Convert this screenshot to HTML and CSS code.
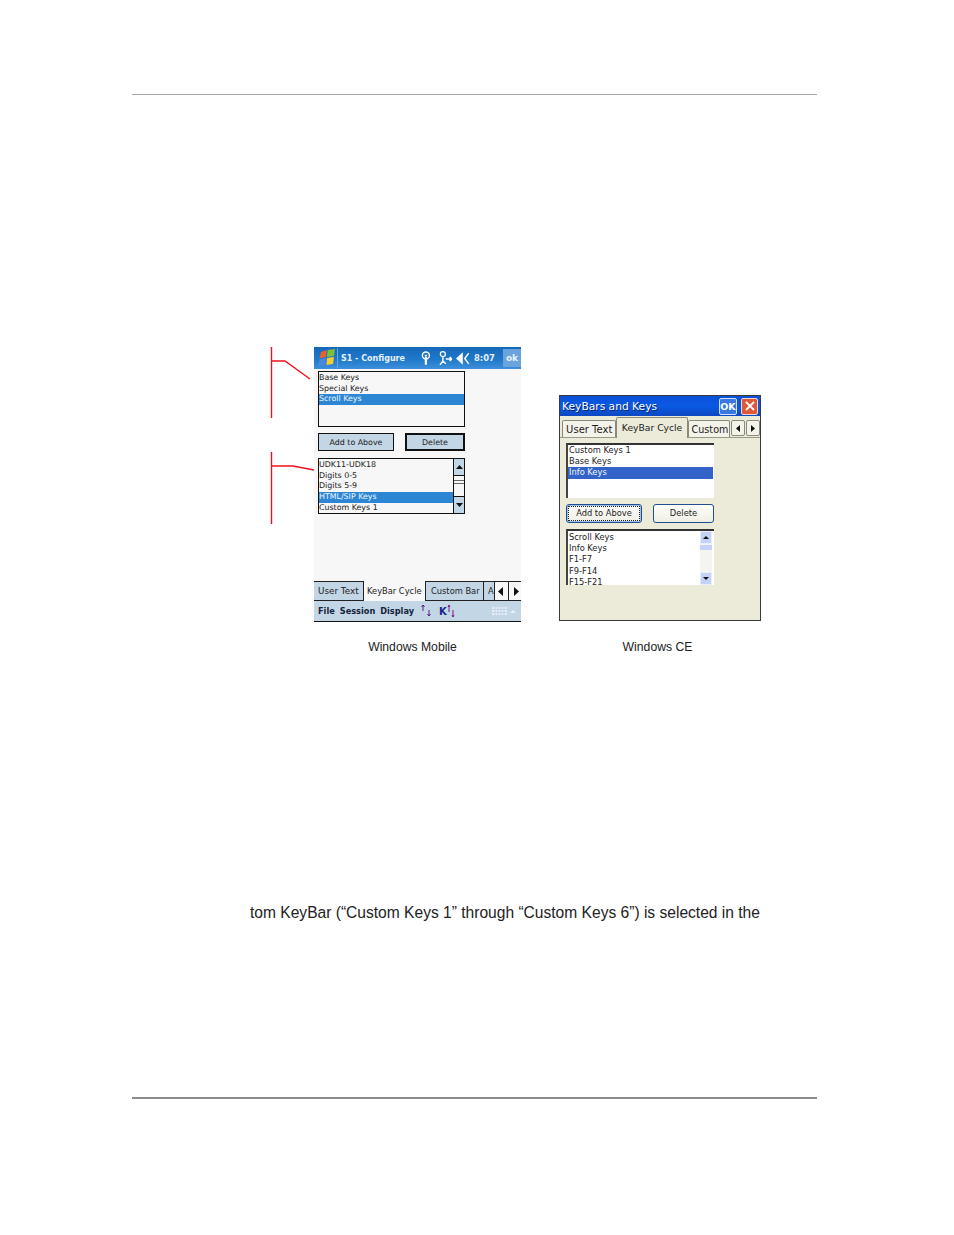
FILE: index.html
```html
<!DOCTYPE html>
<html lang="en">
<head>
<meta charset="utf-8">
<title>KeyBar Cycle configuration</title>
<link rel="stylesheet" href="styles.css">
</head>
<body>
<main class="page">
  <hr class="rule top-rule">
  <section class="figure">
    <svg class="callouts" width="60" height="190" viewBox="0 0 60 190">
      <path d="M11.5 0V71M11 14H25L50 32M11.5 105V177M11 119H33L54 123" fill="none" stroke="#f0101c" stroke-width="1.4"/>
    </svg>
    <div class="col col-wm">
      <div class="wm">
        <header class="wm-title">
          <svg class="flag" width="18" height="18" viewBox="0 0 18 18">
            <path d="M3 3 8.500 1 8 8 1.500 9.500Z" fill="#e8602a"/><path d="M9.500 1 17 0 16 7 9 8Z" fill="#7cc03c"/>
            <path d="M1.500 10.500 8 9 7.500 16 0 17.500Z" fill="#4a88e0"/><path d="M9 9 16 8 15 15 8.500 16Z" fill="#f6cc30"/>
          </svg>
          <span class="wm-sep"></span>
          <span class="wm-name">S1 - Configure</span>
          <svg class="wm-ant" width="10" height="14" viewBox="0 0 10 14"><circle cx="5" cy="4.500" r="3.600" fill="none" stroke="#fff" stroke-width="1.400"/><circle cx="5" cy="4.500" r="1.200" fill="#fff"/><path d="M5 6V14" stroke="#fff" stroke-width="2.200"/></svg>
          <svg class="wm-sync" width="15" height="14" viewBox="0 0 15 14"><circle cx="5" cy="3" r="2.600" fill="none" stroke="#fff" stroke-width="1.300"/><path d="M5 6V10L2 14M5 10 8 13M8 8H14M12 6 14 8 12 10" fill="none" stroke="#fff" stroke-width="1.500"/></svg>
          <svg class="wm-vol" width="14" height="13" viewBox="0 0 14 13"><path d="M0 6.500 7 0V13Z" fill="#fff"/><path d="M13 1 9 6.500 13 12" fill="none" stroke="#fff" stroke-width="1.500"/></svg>
          <span class="wm-time">8:07</span>
          <span class="wm-ok">ok</span>
        </header>
        <div class="wm-body">
          <ul class="wm-list wm-list-a">
            <li>Base Keys</li>
            <li>Special Keys</li>
            <li class="sel">Scroll Keys</li>
          </ul>
          <div class="wm-btns">
            <button class="wm-btn wm-add">Add to Above</button>
            <button class="wm-btn wm-del">Delete</button>
          </div>
          <div class="wm-list-b">
            <ul class="wm-list-b-items">
              <li>UDK11-UDK18</li>
              <li>Digits 0-5</li>
              <li>Digits 5-9</li>
              <li class="sel">HTML/SIP Keys</li>
              <li>Custom Keys 1</li>
            </ul>
            <div class="wm-scroll">
              <span class="wm-sb-btn"><svg width="7" height="4" viewBox="0 0 7 4"><path d="M3.500 0 7 4H0Z"/></svg></span>
              <span class="wm-sb-track"><span class="wm-sb-thumb"></span></span>
              <span class="wm-sb-btn"><svg width="7" height="4" viewBox="0 0 7 4"><path d="M3.500 4 7 0H0Z"/></svg></span>
            </div>
          </div>
        </div>
        <nav class="wm-tabs">
          <span class="wm-tab wm-tab-1">User Text</span>
          <span class="wm-tab wm-tab-on">KeyBar Cycle</span>
          <span class="wm-tab wm-tab-3">Custom Bar</span>
          <span class="wm-tab wm-tab-4">A</span>
          <span class="wm-arrows">
            <svg width="5" height="9" viewBox="0 0 5 9"><path d="M5 0V9L0 4.500Z"/></svg>
            <i></i>
            <svg width="5" height="9" viewBox="0 0 5 9"><path d="M0 0V9L5 4.500Z"/></svg>
          </span>
        </nav>
        <footer class="wm-menu">
          <b>File</b><b>Session</b><b>Display</b>
          <svg class="wm-ud" width="12" height="12" viewBox="0 0 12 12"><path d="M3 0V6M1.500 2 3 0 4.500 2" fill="none" stroke="#5a1f8a"/><path d="M9 5V11M7.500 9 9 11 10.500 9" fill="none" stroke="#5a1f8a"/></svg>
          <span class="wm-k">K</span>
          <svg class="wm-ud2" width="8" height="13" viewBox="0 0 8 13"><path d="M2 0V7M1 2 2 0 3 2M6 5V12M5 10 6 12 7 10" fill="none" stroke="#7a1f8a"/></svg>
          <svg class="wm-kbd" width="15" height="8" viewBox="0 0 15 8"><rect width="15" height="8" fill="#e4ecf6"/><path d="M0 2.500H15M0 5.500H15M3 0V8M6 0V8M9 0V8M12 0V8" stroke="#b4c8de" stroke-width=".6"/></svg>
          <svg class="wm-up" width="6" height="3" viewBox="0 0 6 3"><path d="M3 0 6 3H0Z" fill="#e8eff8"/></svg>
        </footer>
      </div>
      <p class="caption cap-wm">Windows Mobile</p>
    </div>
    <div class="col col-ce">
      <div class="ce">
        <header class="ce-title">
          <span class="ce-name">KeyBars and Keys</span>
          <span class="ce-ok">OK</span>
          <span class="ce-x"><svg width="10" height="10" viewBox="0 0 10 10"><path d="M1 1 9 9M9 1 1 9" stroke="#fff" stroke-width="1.800"/></svg></span>
        </header>
        <nav class="ce-tabs">
          <span class="ce-tab ce-tab-1">User Text</span>
          <span class="ce-tab ce-tab-on">KeyBar Cycle</span>
          <span class="ce-tab ce-tab-3">Custom</span>
          <span class="ce-arrow"><svg width="4" height="7" viewBox="0 0 4 7"><path d="M4 0V7L0 3.500Z"/></svg></span>
          <span class="ce-arrow"><svg width="4" height="7" viewBox="0 0 4 7"><path d="M0 0V7L4 3.500Z"/></svg></span>
        </nav>
        <div class="ce-body">
          <ul class="ce-list ce-list-a">
            <li>Custom Keys 1</li>
            <li>Base Keys</li>
            <li class="sel">Info Keys</li>
          </ul>
          <div class="ce-btns">
            <button class="ce-btn ce-add"><span>Add to Above</span></button>
            <button class="ce-btn ce-del">Delete</button>
          </div>
          <div class="ce-list-b">
            <ul class="ce-list-b-items">
              <li>Scroll Keys</li>
              <li>Info Keys</li>
              <li>F1-F7</li>
              <li>F9-F14</li>
              <li>F15-F21</li>
            </ul>
            <div class="ce-scroll">
              <span class="ce-sb-btn"><svg width="6" height="3" viewBox="0 0 6 3"><path d="M3 0 6 3H0Z"/></svg></span>
              <span class="ce-sb-track"><span class="ce-sb-thumb"></span></span>
              <span class="ce-sb-btn"><svg width="6" height="3" viewBox="0 0 6 3"><path d="M3 3 6 0H0Z"/></svg></span>
            </div>
          </div>
        </div>
      </div>
      <p class="caption cap-ce">Windows CE</p>
    </div>
  </section>
  <p class="body-line">tom KeyBar (“Custom Keys 1” through “Custom Keys 6”) is selected in the</p>
  <hr class="rule bottom-rule">
</main>
</body>
</html>
```
FILE: styles.css
```css
* { box-sizing: border-box; }
html, body { margin: 0; padding: 0; background: #fff; }
body { font-family: "Liberation Sans", Arial, sans-serif; color: #1a1a1a; width: 954px; height: 1235px; overflow: hidden; }
ul { list-style: none; margin: 0; padding: 0; }
p { margin: 0; }
button { font: inherit; color: inherit; padding: 0; margin: 0; }
.page { padding: 94px 137px 0 132px; }
.rule { border: 0; margin: 0; width: 685px; }
.top-rule { height: 1px; background: #a8a8a8; }
.bottom-rule { height: 2px; background: #8c8c8c; margin-top: 176px; }

.figure { position: relative; display: flex; align-items: flex-start; margin-top: 252px; padding-left: 182px; gap: 38px; }
.callouts { position: absolute; left: 128px; top: 0; }
.col { display: flex; flex-direction: column; }
.caption { font-size: 12.200px; line-height: 14px; color: #222; text-align: center; }
.cap-wm { margin-top: 18px; width: 197px; }
.cap-ce { margin-top: 19px; width: 197px; }
.col-ce { padding-top: 48px; }

/* Windows Mobile */
.wm { width: 207px; height: 275px; background: #f7f7f7; border-bottom: 1px solid #111; display: flex; flex-direction: column; font-family: "DejaVu Sans", sans-serif; font-size: 7.900px; color: #222; }
.wm-title { height: 22px; flex: none; display: flex; align-items: center; background: linear-gradient(#1668b8, #1f78ca 55%, #3d90da); color: #e6f1fc; font-weight: 700; padding-left: 4px; }
.flag { flex: none; margin-right: 1px; }
.wm-sep { width: 1px; height: 20px; background: #6aa6de; margin: 0 3px 0 0; }
.wm-name { width: 80px; flex: none; font-size: 8px; white-space: nowrap; }
.wm-ant { margin-right: 7px; }
.wm-sync { margin-right: 4px; }
.wm-vol { margin-right: 4px; }
.wm-time { width: 29px; flex: none; font-size: 8.400px; }
.wm-ok { width: 18px; height: 18px; flex: none; margin-left: 0; background: #6ba3dc; text-align: center; line-height: 18px; font-size: 9px; }
.wm-body { flex: 1; padding: 2px 56px 0 4px; }
.wm-list-a { height: 56px; border: 1px solid #111; background: #f7f7f7; padding-top: 1px; }
.wm-list-a li, .wm-list-b-items li { height: 10.700px; line-height: 10.700px; white-space: nowrap; }
.wm-list-b-items { padding-top: 1px; }
.sel { background: #2c86d4; color: #eef6ff; }
.wm-btns { display: flex; justify-content: space-between; margin-top: 6px; }
.wm-btn { height: 18px; background: #c3d6e6; text-align: center; font-family: inherit; font-size: 7.900px; padding-top: 1px; }
.wm-add { width: 76px; border: 1px solid #111; }
.wm-del { width: 60px; border: 2px solid #111; }
.wm-list-b { display: flex; height: 56px; margin-top: 7px; border: 1px solid #111; background: #f7f7f7; }
.wm-list-b-items { flex: 1; overflow: hidden; }
.wm-scroll { width: 11px; flex: none; display: flex; flex-direction: column; border-left: 1px solid #111; }
.wm-sb-btn { height: 16px; background: #c3d6e6; display: flex; align-items: center; justify-content: center; }
.wm-sb-btn svg { display: block; fill: #111; }
.wm-sb-track { flex: 1; background: #f7f7f7; display: flex; align-items: center; border-top: 1px solid #111; border-bottom: 1px solid #111; }
.wm-sb-thumb { display: flex; width: 100%; height: 100%; align-items: center; background: linear-gradient(#f7f7f7 0 4px, #666 4px 5px, #f7f7f7 5px 7px, #666 7px 8px, #f7f7f7 8px 100%); }
.wm-tabs { height: 20px; flex: none; display: flex; align-items: stretch; background: #c3d6e6; border-top: 1px solid #222; border-bottom: 1px solid #222; position: relative; white-space: nowrap; }
.wm-tab { display: flex; align-items: center; padding-left: 4px; font-size: 8.300px; }
.wm-tab-1 { width: 49px; font-size: 8.800px; }
.wm-tab-on { width: 63px; background: #f7f7f7; margin-top: -1px; margin-bottom: -1px; border-left: 1px solid #222; border-right: 1px solid #222; padding-left: 3px; }
.wm-tab-3 { width: 58px; border-right: 1px solid #222; padding-left: 5px; }
.wm-tab-4 { width: 10px; }
.wm-arrows { position: absolute; right: 0; top: -1px; bottom: -1px; width: 27px; display: flex; align-items: center; justify-content: space-around; background: #f7f7f7; border: 1px solid #222; border-right: 0; }
.wm-arrows svg { fill: #111; display: block; }
.wm-arrows i { width: 1px; align-self: stretch; background: #222; }
.wm-menu { height: 20px; flex: none; display: flex; align-items: center; background: #c3d6e6; padding-left: 4px; color: #15233a; font-size: 8.200px; }
.wm-menu b { margin-right: 5px; }
.wm-ud { margin-left: 1px; }
.wm-k { color: #1a1f8a; font-weight: 700; font-size: 10px; margin-left: 7px; }
.wm-ud2 { margin-left: 0; }
.wm-kbd { margin-left: auto; }
.wm-up { margin: 0 5px 0 3px; }

/* Windows CE */
.ce { width: 202px; height: 226px; background: #ecead9; border: 1px solid #3a3a3a; display: flex; flex-direction: column; font-family: "DejaVu Sans", sans-serif; font-size: 8.300px; color: #222; }
.ce-title { height: 20px; flex: none; display: flex; align-items: center; background: linear-gradient(#0a50d8, #0a5ae4 50%, #0c48c0); color: #fff; padding: 0 2px 0 2px; }
.ce-name { flex: 1; font-size: 10.700px; text-shadow: 1px 1px 0 #06246a; white-space: nowrap; }
.ce-ok { width: 18px; height: 17px; background: #3a78e0; border: 1px solid #cfe0fa; border-radius: 2px; text-align: center; line-height: 15px; font-size: 9.500px; font-weight: 700; margin-right: 4px; }
.ce-x { width: 17px; height: 17px; background: #e0583a; border: 1px solid #f0d6cc; border-radius: 2px; display: flex; align-items: center; justify-content: center; }
.ce-x svg { display: block; }
.ce-tabs { height: 22px; flex: none; display: flex; align-items: flex-end; padding: 0 0 0 2px; border-bottom: 1px solid #9a9a8a; }
.ce-tab { display: flex; align-items: center; justify-content: center; white-space: nowrap; background: #f4f3ea; border: 1px solid #8a8a7c; border-bottom: 0; border-radius: 2px 2px 0 0; }
.ce-tab-1 { width: 55px; height: 17px; font-size: 10px; }
.ce-tab-on { width: 72px; height: 21px; font-size: 9.200px; background: #ecead9; margin-bottom: -1px; padding-bottom: 2px; }
.ce-tab-3 { width: 43px; height: 17px; font-size: 9.600px; padding-left: 2px; }
.ce-arrow { width: 14px; height: 16px; margin-left: 1px; margin-bottom: 1px; background: #f4f3ea; border: 1px solid #8a8a7c; border-radius: 2px; display: flex; align-items: center; justify-content: center; }
.ce-arrow svg { fill: #111; display: block; }
.ce-body { flex: 1; padding: 5px 46px 0 6px; }
.ce-list-a { height: 55px; background: #fff; border-top: 2px solid #333; border-left: 2px solid #444; padding-right: 1px; }
.ce-list-a li, .ce-list-b-items li { height: 11.200px; line-height: 11.200px; padding-left: 1px; white-space: nowrap; }
.ce-list-a .sel { background: #3363c8; color: #f2f5ff; }
.ce-btns { display: flex; justify-content: space-between; margin-top: 6px; }
.ce-btn { height: 19px; background: linear-gradient(#fdfdfa, #f0efe6); border: 1px solid #1f4f8f; border-radius: 3px; font-family: inherit; font-size: 8.300px; text-align: center; padding-bottom: 2px; }
.ce-add { width: 76px; padding: 1px; box-shadow: inset 0 0 0 1px #9cc0ea; }
.ce-add span { display: block; height: 100%; line-height: 13px; border: 1px dotted #222; }
.ce-del { width: 61px; }
.ce-list-b { display: flex; height: 56px; margin-top: 6px; background: #fff; border-top: 2px solid #333; border-left: 2px solid #444; padding-right: 2px; }
.ce-list-b-items { flex: 1; overflow: hidden; padding-top: 1px; }
.ce-scroll { width: 12px; flex: none; display: flex; flex-direction: column; }
.ce-sb-btn { height: 13px; flex: none; background: #c3d2f6; border: 1px solid #e8eefc; display: flex; align-items: center; justify-content: center; }
.ce-sb-btn svg { display: block; fill: #111; }
.ce-sb-track { flex: 1; background: #f4f4f0; padding-top: 1px; }
.ce-sb-thumb { display: block; height: 5px; background: #c3d2f6; }

.body-line { margin: 0; padding-left: 118px; margin-top: 250px; font-size: 15.580px; line-height: 17px; color: #222; white-space: nowrap; }
```
